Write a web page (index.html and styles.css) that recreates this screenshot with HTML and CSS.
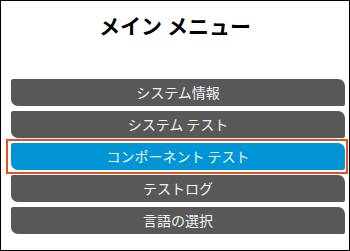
FILE: index.html
```html
<!DOCTYPE html>
<html lang="ja">
<head>
<meta charset="utf-8">
<title>メイン メニュー</title>
<link rel="stylesheet" href="styles.css">
</head>
<body>
<div class="frame">
  <h1 class="title">メイン メニュー</h1>
  <ul class="menu">
    <li class="item">システム情報</li>
    <li class="item">システム テスト</li>
    <li class="item item--active">コンポーネント テスト</li>
    <li class="item">テストログ</li>
    <li class="item">言語の選択</li>
  </ul>
</div>
</body>
</html>
```
FILE: styles.css
```css
html, body {
  margin: 0;
  padding: 0;
  background: #ffffff;
}
.frame {
  box-sizing: border-box;
  width: 350px;
  height: 251px;
  border: 1px solid #000000;
  font-family: "Noto Sans CJK JP", "Noto Sans", sans-serif;
}
.title {
  margin: 8px 0 38px;
  line-height: 32px;
  font-size: 21px;
  font-weight: bold;
  text-align: center;
  color: #000000;
}
.menu {
  list-style: none;
  margin: 0;
  padding: 0 4px 0 10px;
  display: flex;
  flex-direction: column;
  gap: 5px;
}
.item {
  position: relative;
  height: 27px;
  line-height: 27px;
  background: #585858;
  color: #f2f2f2;
  font-size: 14px;
  text-align: center;
  border-radius: 2px 7px 2px 7px;
}
.item--active {
  background: #0096d6;
}
.item--active::after {
  content: "";
  position: absolute;
  top: -4px;
  bottom: -4px;
  left: -5px;
  right: -3px;
  border: 2px solid #e5501e;
  pointer-events: none;
}
```
